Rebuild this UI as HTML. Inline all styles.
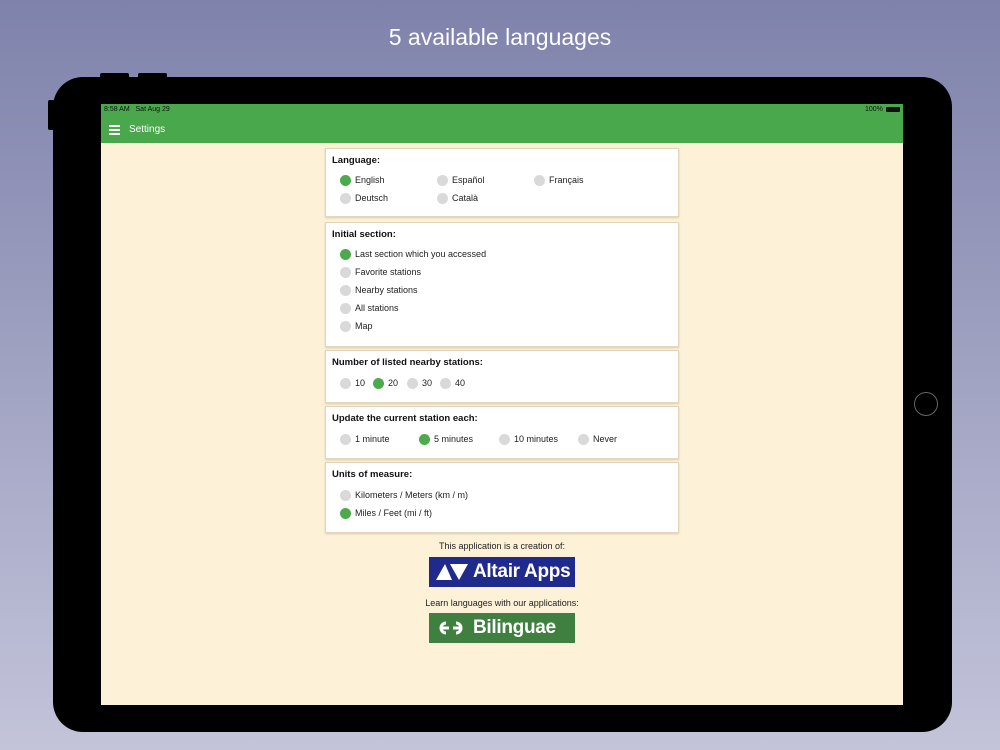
<!DOCTYPE html><html><head><style>
*{margin:0;padding:0;box-sizing:border-box}
body{width:1000px;height:750px;overflow:hidden;background:linear-gradient(#7f82ab,#c3c4da);font-family:"Liberation Sans",sans-serif;position:relative}
.a{position:absolute}
.title{left:0;width:1000px;top:24px;text-align:center;color:#fff;font-size:23px}
.card{position:absolute;left:325px;width:354px;background:#fff;border:1px solid #e2d7bd;box-shadow:0 1px 2px #d8ccb0}
.t{position:absolute;left:6px;font-size:9.5px;font-weight:bold;color:#111}
.r{position:absolute;font-size:9px;color:#222;padding-left:15px;line-height:11px}
.r::before{content:"";position:absolute;left:0;top:0;width:11px;height:11px;border-radius:50%;background:#d9d9d9}
.r.on::before{background:#4caa4c}
.logo{white-space:nowrap;color:#fff;font-size:19px;font-weight:bold;line-height:30px;letter-spacing:-0.3px}
</style></head><body>
<div class="a title">5 available languages</div>
<div class="a" style="left:100px;top:73px;width:29px;height:6px;background:#000;border-radius:2px"></div>
<div class="a" style="left:138px;top:73px;width:29px;height:6px;background:#000;border-radius:2px"></div>
<div class="a" style="left:48px;top:100px;width:8px;height:30px;background:#000;border-radius:2px"></div>
<div class="a" style="left:53px;top:77px;width:899px;height:655px;background:#000;border-radius:30px"></div>
<div class="a" style="left:914px;top:392px;width:24px;height:24px;border:1.5px solid #666;border-radius:50%"></div>
<div class="a" style="left:101px;top:104px;width:802px;height:601px;background:#fdf1d8"></div>
<div class="a" style="left:101px;top:104px;width:802px;height:39px;background:#4aa84c"></div>
<div class="a" style="left:104px;top:106px;font-size:7px;color:#111">8:58 AM&nbsp;&nbsp; Sat Aug 29</div>
<div class="a" style="left:865px;top:106px;font-size:7px;color:#111">100%</div>
<div class="a" style="left:886px;top:107px;width:14px;height:5px;background:#111;border-radius:1px"></div>
<div class="a" style="left:109px;top:129px;width:11px;height:1.5px;background:#fff;box-shadow:0 -4px 0 #fff,0 4px 0 #fff"></div>
<div class="a" style="left:129px;top:124px;font-size:10px;color:#fff">Settings</div>

<div class="card" style="top:148px;height:69px">
<div class="t" style="top:6px">Language:</div>
<div class="r on" style="left:14px;top:26px">English</div>
<div class="r" style="left:111px;top:26px">Español</div>
<div class="r" style="left:208px;top:26px">Français</div>
<div class="r" style="left:14px;top:44px">Deutsch</div>
<div class="r" style="left:111px;top:44px">Català</div>
</div>
<div class="card" style="top:222px;height:125px">
<div class="t" style="top:6px">Initial section:</div>
<div class="r on" style="left:14px;top:26px">Last section which you accessed</div>
<div class="r" style="left:14px;top:44px">Favorite stations</div>
<div class="r" style="left:14px;top:62px">Nearby stations</div>
<div class="r" style="left:14px;top:80px">All stations</div>
<div class="r" style="left:14px;top:98px">Map</div>
</div>
<div class="card" style="top:350px;height:53px">
<div class="t" style="top:6px">Number of listed nearby stations:</div>
<div class="r" style="left:14px;top:27px">10</div>
<div class="r on" style="left:47px;top:27px">20</div>
<div class="r" style="left:81px;top:27px">30</div>
<div class="r" style="left:114px;top:27px">40</div>
</div>
<div class="card" style="top:406px;height:53px">
<div class="t" style="top:6px">Update the current station each:</div>
<div class="r" style="left:14px;top:27px">1 minute</div>
<div class="r on" style="left:93px;top:27px">5 minutes</div>
<div class="r" style="left:173px;top:27px">10 minutes</div>
<div class="r" style="left:252px;top:27px">Never</div>
</div>
<div class="card" style="top:462px;height:71px">
<div class="t" style="top:6px">Units of measure:</div>
<div class="r" style="left:14px;top:27px">Kilometers / Meters (km / m)</div>
<div class="r on" style="left:14px;top:45px">Miles / Feet (mi / ft)</div>
</div>

<div class="a" style="left:325px;width:354px;top:541px;text-align:center;font-size:9px;color:#222">This application is a creation of:</div>
<div class="a logo" style="left:429px;top:557px;width:146px;height:30px;background:#1f2a8c;padding-left:44px">Altair Apps</div>
<svg class="a" style="left:436px;top:564px" width="32" height="16"><polygon points="0,16 9,0 16,16" fill="#fff"/><polygon points="14,0 32,0 23,16" fill="#fff"/></svg>
<div class="a" style="left:325px;width:354px;top:598px;text-align:center;font-size:9px;color:#222">Learn languages with our applications:</div>
<div class="a logo" style="left:429px;top:613px;width:146px;height:30px;background:#3f8040;padding-left:44px">Bilinguae</div>
<svg class="a" style="left:437px;top:620px" width="28" height="16"><path d="M9 3a5 5 0 1 0 0 10M3 8h9M19 3a5 5 0 1 1 0 10M16 8h9" stroke="#fff" stroke-width="3" fill="none"/></svg>
</body></html>
